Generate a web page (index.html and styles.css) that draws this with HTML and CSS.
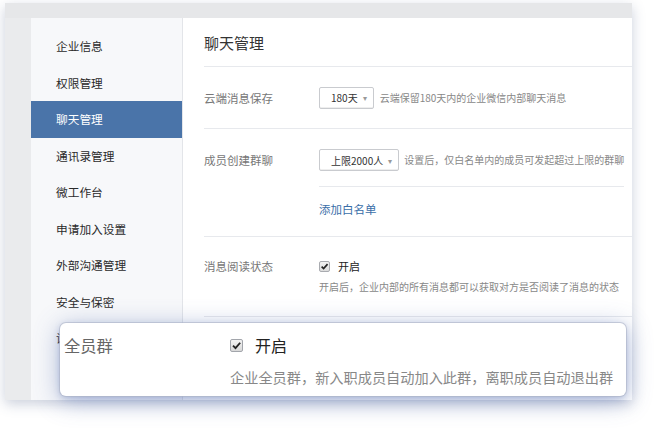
FILE: index.html
```html
<!DOCTYPE html>
<html lang="zh-CN">
<head>
<meta charset="utf-8">
<link rel="stylesheet" href="styles.css">
</head>
<body>
<div class="window">
  <div class="topbar"></div>
  <div class="main">
    <div class="strip"></div>
    <nav class="sidebar">
      <div class="nav-item">企业信息</div>
      <div class="nav-item">权限管理</div>
      <div class="nav-item active">聊天管理</div>
      <div class="nav-item">通讯录管理</div>
      <div class="nav-item">微工作台</div>
      <div class="nav-item">申请加入设置</div>
      <div class="nav-item">外部沟通管理</div>
      <div class="nav-item">安全与保密</div>
      <div class="nav-item">设置</div>
    </nav>
    <section class="content">
      <h1 class="title">聊天管理</h1>
      <div class="row row-1">
        <div class="label">云端消息保存</div>
        <div class="field">
          <span class="select">180天<span class="arrow">▾</span></span>
          <span class="desc">云端保留180天内的企业微信内部聊天消息</span>
        </div>
      </div>
      <div class="row row-2">
        <div class="label">成员创建群聊</div>
        <div class="field-col">
          <div class="sub">
            <span class="select">上限2000人<span class="arrow">▾</span></span>
            <span class="desc">设置后，仅白名单内的成员可发起超过上限的群聊</span>
          </div>
          <a class="link">添加白名单</a>
        </div>
      </div>
      <div class="row row-3">
        <div class="label">消息阅读状态</div>
        <div class="field-col">
          <div class="check-line">
            <span class="checkbox"><svg viewBox="0 0 10 10" width="9" height="9"><path d="M1.8 5.2 L4 7.4 L8.4 2.4" fill="none" stroke="#222" stroke-width="1.8"/></svg></span>
            <span class="on">开启</span>
          </div>
          <div class="desc desc-3">开启后，企业内部的所有消息都可以获取对方是否阅读了消息的状态</div>
        </div>
      </div>
    </section>
  </div>
</div>

<div class="popup">
  <div class="p-label">全员群</div>
  <div class="p-field">
    <div class="p-check-line">
      <span class="p-checkbox"><svg viewBox="0 0 12 12" width="11" height="11"><path d="M2.2 6.2 L4.9 8.9 L10 3" fill="none" stroke="#222" stroke-width="2"/></svg></span>
      <span class="p-on">开启</span>
    </div>
    <div class="p-desc">企业全员群，新入职成员自动加入此群，离职成员自动退出群</div>
  </div>
</div>
</body>
</html>
```

FILE: styles.css
```css
* { box-sizing: border-box; }
html, body {
  margin: 0;
  padding: 0;
  background: #ffffff;
  font-family: "Noto Sans CJK SC", "Noto Sans", sans-serif;
}
body {
  padding: 3px 0 0 5px;
  width: 657px;
  height: 429px;
  overflow: hidden;
}
.window {
  width: 627px;
  height: 397px;
  background: #e9eaec;
  display: flex;
  flex-direction: column;
  box-shadow: 0 4px 12px rgba(70, 85, 130, 0.28);
  overflow: hidden;
}
.topbar {
  height: 15px;
  flex: none;
  background: #e6e7e9;
}
.main {
  flex: 1;
  display: flex;
  min-height: 0;
}
.strip {
  width: 26px;
  flex: none;
  background: #eaebed;
}
.sidebar {
  width: 152px;
  flex: none;
  background: #f7f8fa;
  border-right: 1px solid #e3e5e9;
  padding-top: 10px;
}
.nav-item {
  height: 36.5px;
  line-height: 36.5px;
  padding-left: 25px;
  font-size: 11.7px;
  color: #2a2a2a;
  white-space: nowrap;
}
.nav-item.active {
  background: #4a74a9;
  color: #ffffff;
}
.content {
  flex: 1;
  background: #ffffff;
  padding-left: 21px;
}
.title {
  margin: 0;
  height: 49px;
  padding-top: 15px;
  line-height: 20px;
  font-size: 15px;
  font-weight: normal;
  color: #333;
  border-bottom: 1px solid #e7e9ed;
}
.row {
  display: grid;
  grid-template-columns: 115px 1fr;
  border-bottom: 1px solid #e7e9ed;
}
.label {
  font-size: 11.5px;
  color: #777;
  line-height: 16px;
}
.row-1 {
  height: 62px;
  align-items: center;
}
.field, .sub {
  display: flex;
  align-items: center;
}
.select {
  display: inline-flex;
  align-items: center;
  height: 22px;
  border: 1px solid #c9cbcf;
  border-radius: 2px;
  padding: 0 6px 0 11px;
  font-size: 10px;
  color: #333;
  background: #fff;
  white-space: nowrap;
  flex: none;
  box-shadow: inset 0 -1px 0 #eee;
}
.arrow {
  font-size: 8px;
  color: #999;
  margin-left: 5px;
}
.desc {
  font-size: 10px;
  color: #888;
  margin-left: 6px;
  white-space: nowrap;
}
.row-2 {
  height: 108px;
  padding-top: 20px;
}
.row-2 .label {
  line-height: 22px;
}
.field-col {
  display: flex;
  flex-direction: column;
}
.sub {
  height: 38px;
  align-items: flex-start;
  border-bottom: 1px solid #e7e9ed;
  margin-right: 10px;
}
.sub .desc {
  line-height: 22px;
  margin-left: 5px;
}
.link {
  margin-top: 14px;
  font-size: 11.5px;
  line-height: 16px;
  color: #3a6ea8;
}
.row-3 {
  height: 80px;
  padding-top: 21px;
}
.check-line {
  display: flex;
  align-items: center;
  height: 16px;
}
.checkbox {
  width: 11px;
  height: 11px;
  border: 1px solid #a9abb0;
  border-radius: 2px;
  background: linear-gradient(#f2f2f2, #dcdcdc);
  display: inline-flex;
  align-items: center;
  justify-content: center;
}
.on {
  margin-left: 8px;
  font-size: 11px;
  color: #222;
}
.desc-3 {
  margin-left: 0;
  margin-top: 6px;
  line-height: 14px;
}

.popup {
  position: absolute;
  left: 60px;
  top: 323px;
  width: 566px;
  height: 73px;
  background: #ffffff;
  border-radius: 6px;
  box-shadow: 0 0 0 1px rgba(175, 182, 200, 0.6), 0 2px 6px rgba(70, 95, 165, 0.3), 0 4px 26px rgba(70, 95, 170, 0.42);
  display: grid;
  grid-template-columns: 166px 1fr;
  padding: 12px 0 0 4px;
}
.p-label {
  font-size: 16.3px;
  line-height: 20px;
  color: #666;
}
.p-check-line {
  display: flex;
  align-items: center;
  height: 20px;
}
.p-checkbox {
  width: 13px;
  height: 13px;
  border: 1px solid #a2a5ab;
  border-radius: 2px;
  background: linear-gradient(#f3f3f3, #d8d8d8);
  display: inline-flex;
  align-items: center;
  justify-content: center;
}
.p-on {
  margin-left: 12px;
  font-size: 16px;
  color: #222;
}
.p-desc {
  margin-top: 13px;
  font-size: 14.2px;
  line-height: 18px;
  color: #888;
  white-space: nowrap;
}
```
